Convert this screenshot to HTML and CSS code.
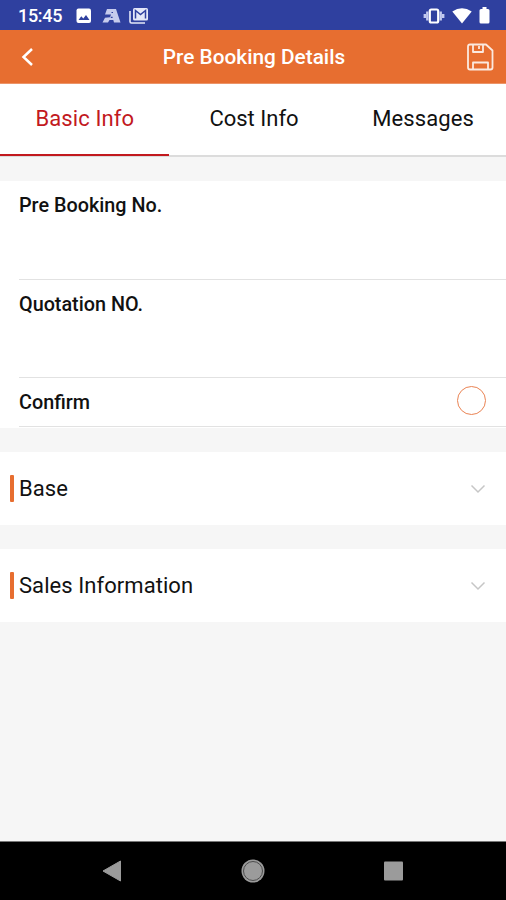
FILE: index.html
```html
<!DOCTYPE html>
<html lang="en">
<head>
<meta charset="utf-8">
<title>Pre Booking Details</title>
<link rel="stylesheet" href="styles.css">
</head>
<body>
<div class="screen">
  <div class="status">
    <span class="time">15:45</span>
    <svg class="ic-photo" width="16" height="16" viewBox="0 0 16 16"><rect x=".5" y=".5" width="14.5" height="14.5" rx="2" fill="#fff"/><path d="M2.500 12 5.300 8.300l2 2.300 2.700-3.600 3.500 5z" fill="#2f409f"/></svg>
    <svg class="ic-app" width="19" height="16" viewBox="0 0 19 16"><path d="M5 1h9l4.500 13.500H12L11.300 12H7.500L6 14.500H.5L3 9.700l5-.4L9 6.500H3z" fill="#c6cbed"/><path d="M9.500 4.500h1.500M8.800 9.300h1.800" stroke="#2f409f" stroke-width="1.200"/></svg>
    <svg class="ic-mail" width="20" height="16" viewBox="0 0 20 16"><rect x="4" y="0" width="15" height="12.500" rx="1.500" fill="#e4e7f8"/><path d="M1 3v10.500q0 1.500 1.500 1.500H16" fill="none" stroke="#e4e7f8" stroke-width="1.600"/><path d="M6.500 10.500v-8l5 4 5-4v8" fill="none" stroke="#2f409f" stroke-width="1.500"/></svg>
    <svg class="ic-vibrate" width="22" height="16" viewBox="0 0 22 16"><rect x="6.800" y="1.500" width="8.400" height="13" rx="1.500" fill="none" stroke="#fff" stroke-width="2.200"/><path d="M4.300 3.500v9M17.700 3.500v9M1.800 6v4M20.200 6v4" stroke="#c3caef" stroke-width="2.400"/></svg>
    <svg class="ic-wifi" width="20" height="16" viewBox="0 0 20 16"><path d="M.3 3.400Q10-3 19.700 3.400L10 15.500z" fill="#fff"/></svg>
    <svg class="ic-battery" width="11" height="17" viewBox="0 0 11 17"><path d="M3.500 0h4v2H9q1.500 0 1.500 1.500v11.500q0 1.500-1.500 1.500H2Q.5 16.500.5 15V3.500Q.5 2 2 2h1.500z" fill="#fff"/></svg>
  </div>
  <header class="bar">
    <svg class="back" width="14" height="20" viewBox="0 0 14 20"><path d="M12 2 3.500 10l8.500 8" fill="none" stroke="#fff" stroke-width="2.500"/></svg>
    <h1>Pre Booking Details</h1>
    <svg class="save" width="27" height="28" viewBox="0 0 27 28"><g fill="none" stroke="#fbe9df" stroke-width="1.800" stroke-linejoin="round"><path d="M3 1.500h16l6.500 6v17q0 2-2 2H3q-2 0-2-2v-21q0-2 2-2z"/><path d="M6 1.500v7.500h10V1.500M12 3v3M6 26v-6.500h15V26"/></g></svg>
  </header>
  <nav class="tabs">
    <div class="tab active"><span>Basic Info</span></div>
    <div class="tab"><span>Cost Info</span></div>
    <div class="tab"><span>Messages</span></div>
  </nav>
  <section class="fields">
    <div class="field">Pre Booking No.</div>
    <div class="field">Quotation NO.</div>
    <div class="field confirm"><span>Confirm</span><i class="radio"></i></div>
  </section>
  <section class="group"><i class="mark"></i><h2>Base</h2><svg width="16" height="10" viewBox="0 0 16 10"><path d="m1.500 1.500 6.500 6.500 6.500-6.500" fill="none" stroke="#c6c6c6" stroke-width="1.500"/></svg></section>
  <section class="group"><i class="mark"></i><h2>Sales Information</h2><svg width="16" height="10" viewBox="0 0 16 10"><path d="m1.500 1.500 6.500 6.500 6.500-6.500" fill="none" stroke="#c6c6c6" stroke-width="1.500"/></svg></section>
  <footer class="keys">
    <svg width="20" height="22" viewBox="0 0 20 22"><path d="M1 11 18.500 1v20z" fill="#9b9b9b" stroke="#9b9b9b" stroke-linejoin="round"/></svg>
    <svg width="24" height="24" viewBox="0 0 24 24"><circle cx="12" cy="12" r="11.500" fill="#9b9b9b"/><circle cx="12" cy="12" r="9.500" fill="none" stroke="#4c4c4c"/></svg>
    <svg width="20" height="20" viewBox="0 0 20 20"><rect x="0" y=".5" width="19" height="19" rx="1" fill="#9b9b9b"/></svg>
  </footer>
</div>
</body>
</html>
```
FILE: styles.css
```css
* { box-sizing: border-box; }
body { margin: 0; font-family: Roboto, "Liberation Sans", sans-serif; color: #111; }
h1, h2 { margin: 0; }
svg { display: block; flex: none; }
.screen { width: 506px; height: 900px; display: flex; flex-direction: column; background: #f6f6f6; }

.status { height: 30px; background: #2f409f; display: flex; align-items: center; padding: 1px 16px 0 18px; color: #fff; }
.time { width: 58px; font-size: 18px; font-weight: 500; line-height: 28px; letter-spacing: -.3px; }
.ic-app { margin-left: 10px; }
.ic-mail { margin-left: 8px; }
.ic-vibrate { margin-left: auto; }
.ic-wifi { margin-left: 7px; }
.ic-battery { margin-left: 7px; }

.bar { height: 54px; background: #e76e30; border-bottom: 1px solid #ec9468; color: #fff; display: grid; grid-template-columns: 60px 1fr 60px; align-items: center; }
.bar h1 { font-size: 20.800px; font-weight: 500; text-align: center; line-height: 24px; padding-left: 2px; }
.back { margin-left: 20px; }
.save { justify-self: end; margin-right: 12px; }

.tabs { height: 73px; flex: none; display: grid; grid-template-columns: repeat(3, 1fr); background: #fff; border-bottom: 2px solid #dcdcdc; }
.tab { height: 72px; display: flex; justify-content: center; padding: 21px 0 0 2px; font-size: 22px; line-height: 28px; }
.tab:last-child { padding-left: 3px; letter-spacing: .1px; }
.tab.active { padding-left: 1px; letter-spacing: .1px; color: #c2191e; border-bottom: 2px solid #c2191e; }

.fields { margin-top: 24px; padding: 0 0 1px 19px; background: #fff; }
.field { height: 98.500px; padding-top: 13px; border-bottom: 1.500px solid #e2e2e2; font-size: 19.800px; line-height: 24px; font-weight: 500; }
.confirm { height: 49px; display: flex; justify-content: space-between; padding-right: 20px; }
.radio { width: 29px; height: 29px; margin-top: -5px; border: 1.500px solid #ea8353; border-radius: 50%; }

.group { height: 73px; margin-top: 24px; padding: 0 20px 0 10px; background: #fff; display: flex; align-items: center; }
.mark { width: 4px; height: 27px; border-radius: 1px; background: #e76e30; }
.group h2 { margin: 0 0 0 5px; font-size: 22px; line-height: 28px; font-weight: 400; letter-spacing: .06px; flex: 1; }

.keys { height: 59px; margin-top: auto; border-top: 1px solid #777; background: #000; display: flex; align-items: center; justify-content: space-between; padding: 0 102px; }
```
